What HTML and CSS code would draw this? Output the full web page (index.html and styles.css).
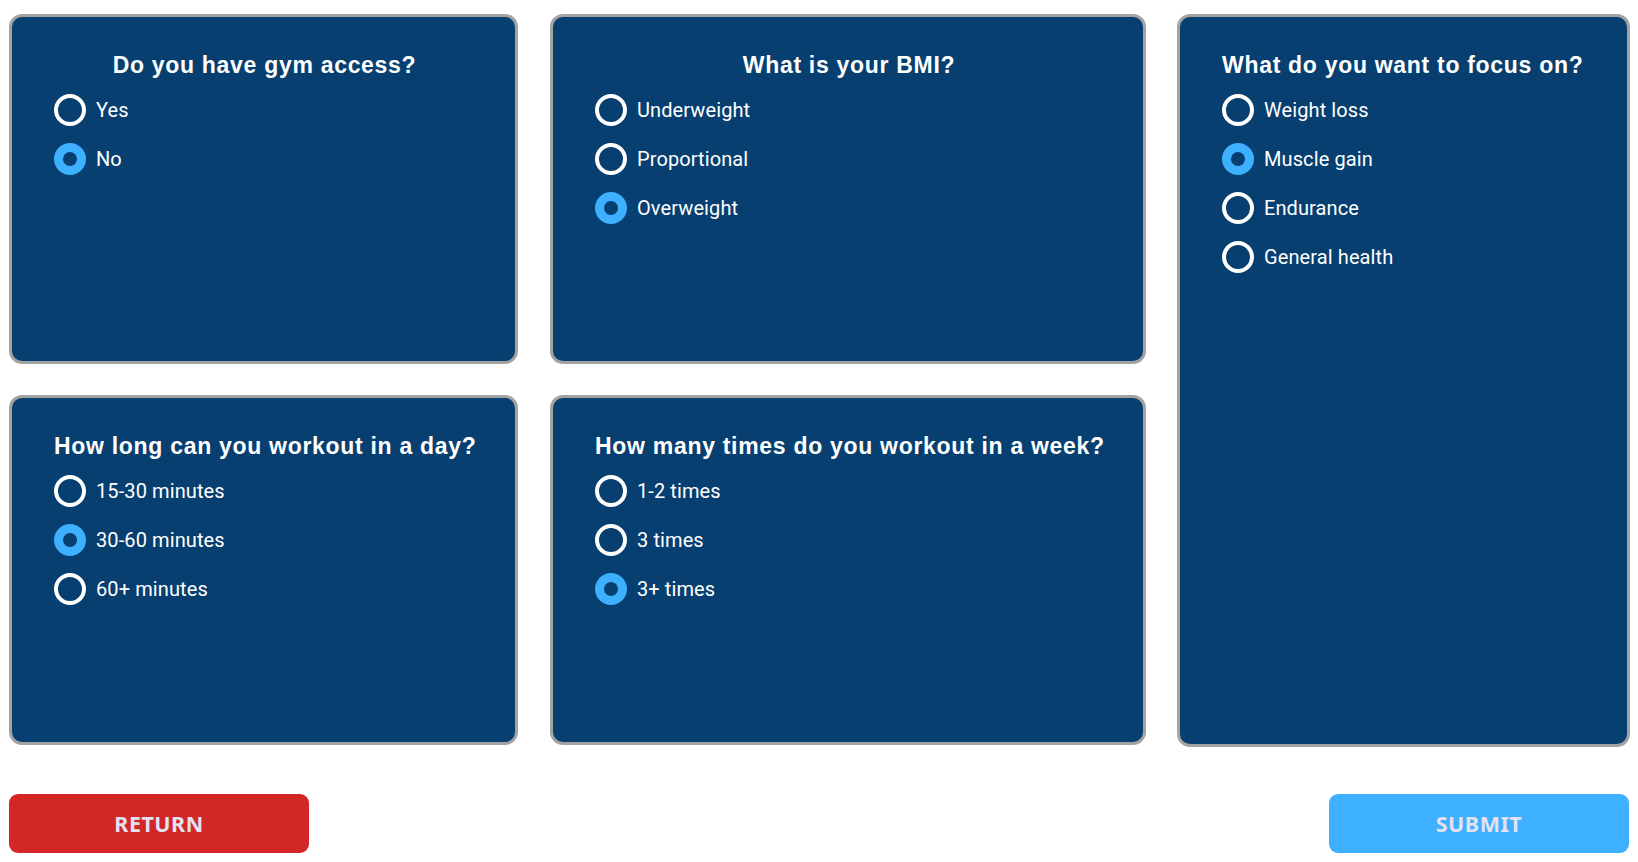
FILE: index.html
```html
<!DOCTYPE html>
<html lang="en">
<head>
<meta charset="utf-8">
<title>Workout questionnaire</title>
<link rel="stylesheet" href="styles.css">
</head>
<body>
<main class="page">
  <section class="grid">
    <div class="card c-gym">
      <h2 class="q">Do you have gym access?</h2>
      <ul class="opts">
        <li class="opt"><span class="radio"></span><span class="lbl">Yes</span></li>
        <li class="opt"><span class="radio on"></span><span class="lbl">No</span></li>
      </ul>
    </div>
    <div class="card c-bmi">
      <h2 class="q">What is your BMI?</h2>
      <ul class="opts">
        <li class="opt"><span class="radio"></span><span class="lbl">Underweight</span></li>
        <li class="opt"><span class="radio"></span><span class="lbl">Proportional</span></li>
        <li class="opt"><span class="radio on"></span><span class="lbl">Overweight</span></li>
      </ul>
    </div>
    <div class="card c-focus">
      <h2 class="q">What do you want to focus on?</h2>
      <ul class="opts">
        <li class="opt"><span class="radio"></span><span class="lbl">Weight loss</span></li>
        <li class="opt"><span class="radio on"></span><span class="lbl">Muscle gain</span></li>
        <li class="opt"><span class="radio"></span><span class="lbl">Endurance</span></li>
        <li class="opt"><span class="radio"></span><span class="lbl">General health</span></li>
      </ul>
    </div>
    <div class="card c-day">
      <h2 class="q">How long can you workout in a day?</h2>
      <ul class="opts">
        <li class="opt"><span class="radio"></span><span class="lbl">15-30 minutes</span></li>
        <li class="opt"><span class="radio on"></span><span class="lbl">30-60 minutes</span></li>
        <li class="opt"><span class="radio"></span><span class="lbl">60+ minutes</span></li>
      </ul>
    </div>
    <div class="card c-week">
      <h2 class="q">How many times do you workout in a week?</h2>
      <ul class="opts">
        <li class="opt"><span class="radio"></span><span class="lbl">1-2 times</span></li>
        <li class="opt"><span class="radio"></span><span class="lbl">3 times</span></li>
        <li class="opt"><span class="radio on"></span><span class="lbl">3+ times</span></li>
      </ul>
    </div>
  </section>
  <footer class="actions">
    <button class="btn btn-return">RETURN</button>
    <button class="btn btn-submit">SUBMIT</button>
  </footer>
</main>
</body>
</html>
```
FILE: styles.css
```css
* { box-sizing: border-box; }
html, body { margin: 0; padding: 0; background: #ffffff; }
body { font-family: Roboto, "Noto Sans", sans-serif; }

.page {
  padding: 14px 9px 0 9px;
  width: 1638px;
}

.grid {
  display: grid;
  grid-template-columns: 509px 596px 452px;
  grid-template-rows: 350px 350px;
  column-gap: 32px;
  row-gap: 31px;
  width: 1620px;
}
.grid .c-gym { grid-column: 1; grid-row: 1; }
.grid .c-bmi { grid-column: 2; grid-row: 1; }
.grid .c-focus { grid-column: 3; grid-row: 1 / span 2; margin-left: -1px; margin-bottom: -2px; }
.grid .c-day { grid-column: 1; grid-row: 2; }
.grid .c-week { grid-column: 2; grid-row: 2; }

.card {
  background: #073f70;
  border: 3px solid #a3a3a3;
  border-radius: 13px;
  padding: 33px 40px 0 42px;
  color: #ffffff;
}

.q {
  margin: 0;
  font-family: "Liberation Sans", Arial, sans-serif;
  font-weight: 700;
  font-size: 23px;
  line-height: 30px;
  letter-spacing: 0.7px;
  text-align: center;
  white-space: nowrap;
}
.c-day .q, .c-week .q, .c-focus .q { text-align: left; }

.opts {
  list-style: none;
  margin: 5px 0 0 0;
  padding: 0;
}
.opt {
  display: flex;
  align-items: center;
  height: 49px;
  gap: 10px;
}
.radio {
  width: 32px;
  height: 32px;
  border-radius: 50%;
  border: 4px solid #ffffff;
  flex: none;
}
.radio.on {
  border: 9px solid #3db0ff;
  background: #073f70;
}
.lbl {
  font-family: Roboto, sans-serif;
  font-size: 20px;
  letter-spacing: 0.1px;
}

.actions {
  display: flex;
  justify-content: space-between;
  margin-top: 49px;
  width: 1620px;
}
.btn {
  width: 300px;
  height: 59px;
  border: none;
  border-radius: 9px;
  font-family: "Noto Sans", "Open Sans", sans-serif;
  font-weight: 700;
  font-size: 21.5px;
  color: #e4e2f2;
  letter-spacing: 0.5px;
  padding: 0;
}
.btn-return { background: #d32626; }
.btn-submit { background: #3db0ff; }
```
